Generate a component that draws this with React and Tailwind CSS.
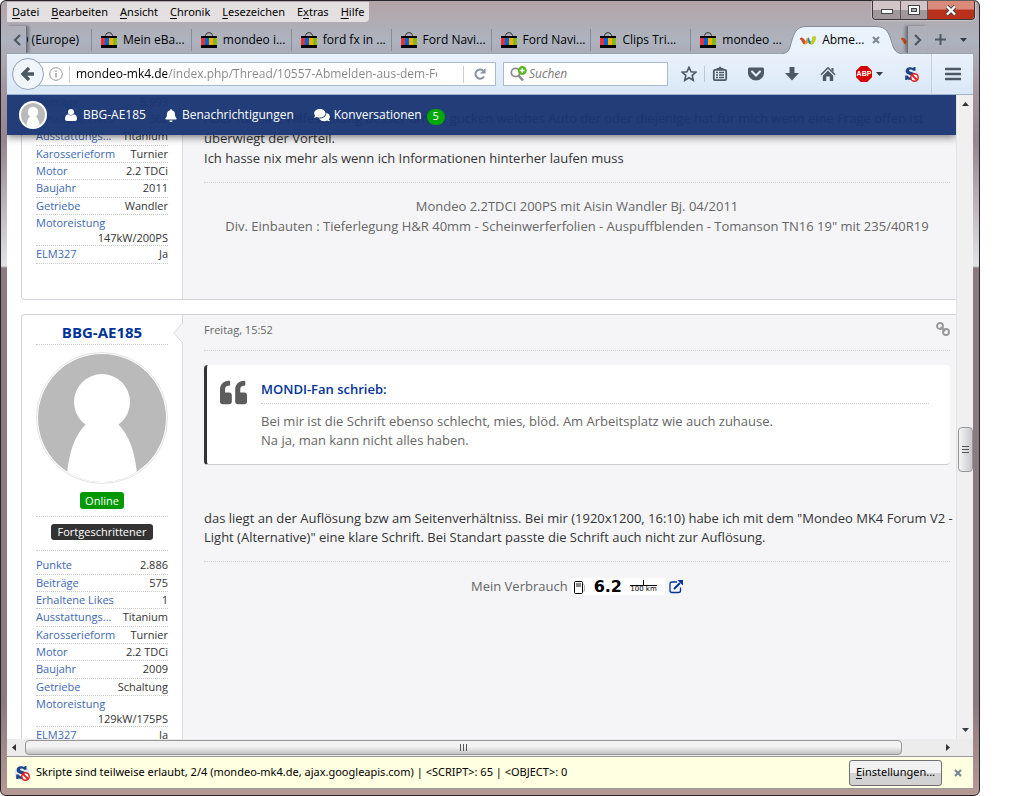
import { useState } from "react";
import { FaBell, FaComments, FaQuoteLeft } from "react-icons/fa";

const menuItems = [
  ["", "D", "atei"],
  ["", "B", "earbeiten"],
  ["", "A", "nsicht"],
  ["", "C", "hronik"],
  ["", "L", "esezeichen"],
  ["E", "x", "tras"],
  ["", "H", "ilfe"],
];

const tabs = [
  "Mein eBa...",
  "mondeo i...",
  "ford fx in ...",
  "Ford Navi...",
  "Ford Navi...",
  "Clips Tri...",
  "mondeo ...",
];

const firstUser = [
  ["Beiträge", "5.993"],
  ["Erhaltene Likes", "362"],
  ["Ausstattungs...", "Titanium"],
  ["Karosserieform", "Turnier"],
  ["Motor", "2.2 TDCi"],
  ["Baujahr", "2011"],
  ["Getriebe", "Wandler"],
  ["Motoreistung", "147kW/200PS"],
  ["ELM327", "Ja"],
];

const secondUser = [
  ["Punkte", "2.886"],
  ["Beiträge", "575"],
  ["Erhaltene Likes", "1"],
  ["Ausstattungs...", "Titanium"],
  ["Karosserieform", "Turnier"],
  ["Motor", "2.2 TDCi"],
  ["Baujahr", "2009"],
  ["Getriebe", "Schaltung"],
  ["Motoreistung", "129kW/175PS"],
  ["ELM327", "Ja"],
];

// Icons
const BagIcon = () => (
  <svg className="h-4 w-4 shrink-0" viewBox="0 0 16 16">
    <path d="M4.500 5V3.500Q5 .6 8 .6t3.500 2.900V5" fill="none" stroke="#333" />
    <rect y="4" width="16" height="12" fill="#000" />
    <rect y="6" width="4" height="7" fill="#e53238" />
    <rect x="4" y="6" width="4" height="7" fill="#0064d2" />
    <rect x="8" y="6" width="4" height="7" fill="#f5af02" />
    <rect x="12" y="6" width="4" height="7" fill="#86b817" />
  </svg>
);

const ForumIcon = () => (
  <svg className="h-4 w-4 shrink-0" viewBox="0 0 16 16">
    <path d="M0 6Q3 4.500 5 8.500L7 11Q3.500 14 1.800 9.500 1.200 7.500 0 7.500z" fill="#c8502a" />
    <path d="M4.500 11.500Q6 9.500 6.500 6.500L9 5.500Q9.500 12.500 4.500 12.500z" fill="#f09a28" />
    <path d="M8 5.500Q9.500 5.500 9.800 8.500L12 10.500Q11 13.500 8.800 11.500 7.500 10 8 5.500z" fill="#2f8fa8" />
    <path d="M10.500 11Q12.500 8.500 12 5.500 13.500 3 16 4.500 16 11.500 11 13z" fill="#c0cc28" />
  </svg>
);

const NoScriptIcon = () => (
  <svg className="h-4 w-4 shrink-0" viewBox="0 0 16 16">
    <circle cx="8" cy="8" r="7.600" fill="#dfe8f4" />
    <path
      d="M12.500 1v3.800H10Q9.500 3.400 7.600 3.400T6 4.600q.2 1 2.500 1.500 4.300 1 4.300 4-.5 3.900-5 3.900-2.200 0-3.300-.8L4 14H2.200V9.600h2.400q.8 2 3 2 1.800 0 1.800-1.200 0-1-2.400-1.500Q2.600 8 2.600 5 3 1.200 7 1.200q1.800 0 3 .7L11 1z"
      fill="#1c4587"
    />
    <circle cx="11.500" cy="11.500" r="3.700" fill="#fff" stroke="#e02020" strokeWidth="1.500" />
    <path d="M9 9l5 5" stroke="#e02020" strokeWidth="1.800" />
  </svg>
);

const StarIcon = () => (
  <svg className="h-4 w-4" viewBox="0 0 16 16">
    <path
      d="M8 1.200l2 4.500 4.900.5-3.700 3.200 1.100 4.900L8 11.800l-4.300 2.500 1.100-4.900L1.100 6.200 6 5.700z"
      fill="none"
      stroke="#4d5a66"
      strokeWidth="1.600"
    />
  </svg>
);

const ClipboardIcon = () => (
  <svg className="h-4 w-4" viewBox="0 0 16 16">
    <rect x="1.800" y="3.800" width="12.400" height="10.400" rx="1.500" fill="none" stroke="#4d5a66" strokeWidth="1.800" />
    <path d="M4.500 4V2h2L8 .3 9.500 2h2v2z" fill="#4d5a66" />
    <path d="M4 6.500h2M4 9h2M4 11.500h2M7 6.500h5M7 9h5M7 11.500h5" stroke="#4d5a66" strokeWidth="1.400" />
  </svg>
);

const PocketIcon = () => (
  <svg className="h-4 w-4" viewBox="0 0 16 16">
    <path d="M1.500 1.500h13a1.500 1.500 0 0 1 1.500 1.500v4a8 7.500 0 0 1-16 0V3a1.500 1.500 0 0 1 1.500-1.500z" fill="#4d5a66" />
    <path d="M4 5.500l4 4 4-4" fill="none" stroke="#e6f0fa" strokeWidth="2" strokeLinecap="round" />
  </svg>
);

const DownloadIcon = () => (
  <svg className="h-4 w-4" viewBox="0 0 16 16">
    <path d="M5.500 1h5v6H15l-7 7.500L1 7h4.500z" fill="#4d5a66" />
  </svg>
);

const HomeIcon = () => (
  <svg className="h-4 w-4" viewBox="0 0 16 16">
    <path d="M1 8.800l7-7 7 7" fill="none" stroke="#4d5a66" strokeWidth="1.600" />
    <path d="M8 4.500l5.200 5.200V15H9.800v-4.500H6.200V15H2.800V9.700z" fill="#4d5a66" />
    <path d="M11.500 2h2v4l-2-2z" fill="#4d5a66" />
  </svg>
);

const AbpIcon = () => (
  <span className="flex h-4 w-4 items-center justify-center bg-[#d40000] font-['Liberation_Sans'] text-[7px] leading-4 font-bold text-white [clip-path:polygon(30%_0,70%_0,100%_30%,100%_70%,70%_100%,30%_100%,0_70%,0_30%)]">
    ABP
  </span>
);

const Caret = () => (
  <svg className="h-1 w-[7px]" viewBox="0 0 7 4">
    <path d="M0 0h7L3.500 4z" fill="#333c45" />
  </svg>
);

const Chevron = ({ left }) => (
  <svg className="h-3 w-2" viewBox="0 0 8 12">
    <path d={left ? "M7 1L2 6l5 5" : "M1 1l5 5-5 5"} fill="none" stroke="#4d5a66" strokeWidth="2.200" />
  </svg>
);

const CrossIcon = () => (
  <svg className="h-2 w-2" viewBox="0 0 8 8">
    <path d="M1 1l6 6M7 1L1 7" stroke="#7c8896" strokeWidth="2.200" />
  </svg>
);

const UserIcon = () => (
  <svg className="h-3 w-3" viewBox="0 0 12 12">
    <circle cx="6" cy="3" r="3" fill="#fff" />
    <path d="M3.200 5.200Q6 7.600 8.800 5.200 12 5.500 12 10.300 11.800 12 10 12H2Q.2 12 0 10.300 0 5.500 3.200 5.200z" fill="#fff" />
  </svg>
);

const ChainIcon = () => (
  <svg className="h-[14px] w-[14px]" viewBox="0 0 14 14" fill="none" stroke="#999" strokeWidth="1.900">
    <circle cx="4" cy="4" r="3" />
    <circle cx="10" cy="10" r="3" />
    <path d="M4.800 4.800l4.400 4.400" />
  </svg>
);

const AvatarImage = () => (
  <svg className="h-full w-full rounded-full" viewBox="0 0 128 128">
    <rect width="128" height="128" fill="#bababa" />
    <circle cx="64" cy="48" r="28" fill="#fff" />
    <path d="M48 70Q32 86 29 120V128H99V120Q96 86 80 70z" fill="#fff" />
  </svg>
);

const PumpIcon = () => (
  <svg className="h-[17px] w-[14px]" viewBox="0 0 14 17">
    <rect x="2.500" y="3.500" width="8" height="12" rx="1" fill="#fff" stroke="#000" />
    <rect x="4" y="5" width="5" height="4" fill="#888" />
    <path d="M11 5.500l1.500 2V13H11" fill="none" stroke="#a9b6bd" />
  </svg>
);

const ExternalIcon = () => (
  <svg className="h-[14px] w-[14px]" viewBox="0 0 14 14">
    <path d="M8 2H3Q1 2 1 4v6.500q0 2 2 2h6.500q2 0 2-2V7.500" fill="none" stroke="#039" strokeWidth="1.300" />
    <path d="M5 9l6-6" stroke="#039" strokeWidth="2" />
    <path d="M8.500 0H14v5.500z" fill="#039" />
  </svg>
);

const MenuBar = () => (
  <nav className="mt-px flex h-5 items-center gap-3 rounded-br bg-[#e4e0e2] px-[5px] font-['Noto_Sans',sans-serif] text-[11px]">
    {menuItems.map(([before, key, after]) => (
      <button key={key + after}>
        {before}
        <u className="underline-offset-2">{key}</u>
        {after}
      </button>
    ))}
  </nav>
);

const WindowButtons = () => (
  <div className="-mr-0.5 flex h-[19px] overflow-hidden rounded-b border border-t-0 border-[#3c3539] shadow-[0_0_2px_#fff]">
    <button
      aria-label="Minimieren"
      className="flex w-[28px] items-center justify-center border-r border-[#5c5356] bg-linear-to-b from-[#d3c5c7] from-50% to-[#a0989b] to-50%"
    >
      <svg className="mt-1 h-[6px] w-3" viewBox="0 0 12 6">
        <rect x=".5" y=".5" width="11" height="4" fill="#fff" stroke="#444" />
      </svg>
    </button>
    <button
      aria-label="Maximieren"
      className="flex w-[27px] items-center justify-center border-r border-[#5c5356] bg-linear-to-b from-[#d3c5c7] from-50% to-[#a0989b] to-50%"
    >
      <svg className="h-[10px] w-3" viewBox="0 0 12 10">
        <rect x=".5" y=".5" width="11" height="9" fill="#fff" stroke="#444" />
        <rect x="3.500" y="3.500" width="5" height="3" fill="#aaa" stroke="#444" />
      </svg>
    </button>
    <button
      aria-label="Schließen"
      className="flex w-[46px] items-center justify-center bg-linear-to-b from-[#d98a78] from-45% to-[#b8301c] to-50%"
    >
      <svg className="h-[11px] w-3" viewBox="0 0 12 11">
        <path d="M2 1.500l8 8M10 1.500l-8 8" stroke="#444" strokeWidth="4" />
        <path d="M2 1.500l8 8M10 1.500l-8 8" stroke="#fff" strokeWidth="2.400" />
      </svg>
    </button>
  </div>
);

const TabStrip = () => (
  <div className="mt-1 flex h-[27px] items-center text-[12px]">
    <button aria-label="Tabs nach links" className="flex w-5 justify-center self-stretch border-r border-[#6c7078] pt-2 shadow-[2px_0_3px_#0005]">
      <Chevron left />
    </button>
    <div className="flex min-w-0 flex-1 items-center overflow-visible">
      <button className="flex w-16 justify-end overflow-hidden pr-3 whitespace-nowrap">O (Europe)</button>
      {tabs.map((title, i) => (
        <button
          key={i}
          className="flex h-[22px] w-[100px] items-center gap-[6px] border-l border-[#868a94] pl-[9px] whitespace-nowrap"
        >
          <BagIcon />
          {title}
        </button>
      ))}
      <div className="relative flex h-[27px] w-[104px] items-center">
        <svg className="absolute top-0 -left-2 h-7 w-[120px]" viewBox="0 0 120 28">
          <path
            d="M0 27.500C8 27.500 8 20 10 14S14 .5 24 .5H94C105 .5 107 8 109 14S112 27.500 120 27.500V28H0z"
            fill="#eaf2fb"
          />
          <path
            d="M0 27.500C8 27.500 8 20 10 14S14 .5 24 .5H94C105 .5 107 8 109 14S112 27.500 120 27.500"
            fill="none"
            stroke="#858d99"
          />
        </svg>
        <button className="relative flex flex-1 items-center gap-[6px] pl-[10px] whitespace-nowrap">
          <ForumIcon />
          Abme...
        </button>
        <button aria-label="Tab schließen" className="relative pr-[14px]">
          <CrossIcon />
        </button>
      </div>
      <div className="ml-[7px] flex w-[6px] overflow-hidden">
        <ForumIcon />
      </div>
    </div>
    <button aria-label="Tabs nach rechts" className="flex w-5 justify-center self-stretch border-l border-[#6c7078] pt-2 shadow-[-2px_0_3px_#0005]">
      <Chevron />
    </button>
    <button aria-label="Neuer Tab" className="flex w-[26px] justify-center">
      <svg className="h-[11px] w-[11px]" viewBox="0 0 11 11">
        <path d="M5.500 0v11M0 5.500h11" stroke="#4d5a66" strokeWidth="2" />
      </svg>
    </button>
    <button aria-label="Alle Tabs" className="flex w-5 justify-center">
      <Caret />
    </button>
  </div>
);

const Toolbar = () => {
  const [url, setUrl] = useState("mondeo-mk4.de/index.php/Thread/10557-Abmelden-aus-dem-Forum/");
  const [search, setSearch] = useState("");

  return (
    <div className="flex h-[42px] items-center border-t border-b border-t-[#9aa4b2] border-b-[#9db4cc] bg-linear-to-b from-[#eaf2fb] to-[#d9e8f7] pl-[5px]">
      <button
        aria-label="Zurück"
        className="z-10 flex h-8 w-8 items-center justify-center rounded-full border border-[#8fa1b5] bg-[#f1f6fc]"
      >
        <svg className="h-[14px] w-4" viewBox="0 0 16 14">
          <path d="M9 1L3 7l6 6M3 7h11" fill="none" stroke="#4d5a66" strokeWidth="3.400" />
        </svg>
      </button>
      <div className="-ml-2 flex h-6 min-w-0 flex-1 items-center border border-[#a9bccf] bg-white pl-3">
        <svg className="h-[14px] w-[14px] shrink-0" viewBox="0 0 14 14">
          <circle cx="7" cy="7" r="6.300" fill="none" stroke="#999" />
          <path d="M7 6v4.500M7 3.500v1.400" stroke="#999" strokeWidth="1.400" />
        </svg>
        <span className="mr-[6px] ml-[6px] h-[17px] w-px shrink-0 bg-[#ccc]" />
        <input
          aria-label="Adresse"
          value={url}
          onChange={(e) => setUrl(e.target.value)}
          className="mr-[26px] w-0 flex-1 bg-[linear-gradient(90deg,#000_91px,#858585_91px)] bg-clip-text text-[12px] text-transparent outline-none"
        />
        <button aria-label="Neu laden" className="flex h-[17px] w-8 items-center justify-center border-l border-[#ccc]">
          <svg className="h-3 w-3" viewBox="0 0 12 12">
            <path d="M10 8.500A4.600 4.600 0 1 1 9 2.500" fill="none" stroke="#8593a2" strokeWidth="2" />
            <path d="M11.500 0v5.500H6z" fill="#8593a2" />
          </svg>
        </button>
      </div>
      <div className="ml-[7px] flex h-6 w-[165px] items-center border border-[#a9bccf] bg-white pl-[6px]">
        <svg className="h-4 w-[17px] shrink-0" viewBox="0 0 17 16">
          <circle cx="5.500" cy="6.500" r="4.200" fill="none" stroke="#8c8c8c" strokeWidth="1.800" />
          <path d="M8.500 9.500l4.500 5" stroke="#8c8c8c" strokeWidth="2.600" />
          <circle cx="12.300" cy="4.500" r="4.400" fill="#52b818" />
          <path d="M12.300 2v5M9.800 4.500h5" stroke="#fff" strokeWidth="1.400" />
        </svg>
        <input
          aria-label="Suchen"
          placeholder="Suchen"
          value={search}
          onChange={(e) => setSearch(e.target.value)}
          className="ml-[2px] w-0 flex-1 text-[12px] outline-none placeholder:text-[#777] placeholder:italic"
        />
      </div>
      <button aria-label="Lesezeichen hinzufügen" className="ml-[13px]">
        <StarIcon />
      </button>
      <span className="ml-[7px] h-4 w-px bg-[#bcc8d4]" />
      <button aria-label="Lesezeichen anzeigen" className="ml-[7px]">
        <ClipboardIcon />
      </button>
      <button aria-label="Pocket" className="ml-5">
        <PocketIcon />
      </button>
      <button aria-label="Downloads" className="ml-5">
        <DownloadIcon />
      </button>
      <button aria-label="Startseite" className="ml-5">
        <HomeIcon />
      </button>
      <button aria-label="Adblock Plus" className="ml-5 flex items-center gap-1">
        <AbpIcon />
        <Caret />
      </button>
      <button aria-label="NoScript" className="ml-5">
        <NoScriptIcon />
      </button>
      <button aria-label="Menü" className="ml-3 flex h-10 w-[42px] items-center justify-center border-l border-[#c3d1df]">
        <svg className="h-[14px] w-4" viewBox="0 0 16 14">
          <path d="M1 2h14M1 7h14M1 12h14" stroke="#4d5a66" strokeWidth="2.600" strokeLinecap="round" />
        </svg>
      </button>
    </div>
  );
};

const ForumNav = () => (
  <nav className="absolute inset-x-0 top-0 flex h-10 items-center bg-[#193571]/96 pl-3 text-[12px] text-white shadow-[0_2px_8px_#0008]">
    <a href="#profil" aria-label="Profil" className="h-7 w-7 rounded-full bg-white p-[2px]">
      <AvatarImage />
    </a>
    <a href="#benutzer" className="ml-[18px] flex items-center gap-[6px]">
      <UserIcon />
      BBG-AE185
    </a>
    <a href="#benachrichtigungen" className="ml-[18px] flex items-center gap-1">
      <FaBell className="h-[13px] w-[14px]" />
      Benachrichtigungen
    </a>
    <a href="#konversationen" className="ml-5 flex items-center gap-1">
      <FaComments className="h-[14px] w-4" />
      Konversationen
      <span className="mt-[3px] ml-px flex h-4 w-[18px] items-center justify-center rounded-full bg-[#00a800] text-[11px]">
        5
      </span>
    </a>
  </nav>
);

const UserStats = ({ rows }) => (
  <dl className="text-[11px] leading-[15px]">
    {rows.map(([label, value]) => (
      <div
        key={label}
        className="flex min-h-[17px] flex-wrap justify-between border-b border-dotted border-[#ccc] nth-last-[3n+1]:min-h-[18px]"
      >
        <dt className="text-[#4068b4]">{label}</dt>
        <dd className="ml-auto text-[#333]">{value}</dd>
      </div>
    ))}
  </dl>
);

const Post = ({ sidebar, children }) => (
  <article className="ml-[14px] flex rounded-l border-y border-l border-[#d2d3da] bg-[#f5f5f8]">
    <aside className="w-[161px] shrink-0 rounded-l border-r border-[#d9dae0] bg-white px-[14px]">{sidebar}</aside>
    <div className="min-w-0 flex-1 pr-[6px] pl-[21px] text-[13px] leading-[19px] text-[#333]">{children}</div>
  </article>
);

const Page = () => (
  <main className="relative min-w-0 flex-1 overflow-hidden bg-white font-['Open_Sans',sans-serif]">
    <div className="-mt-0.5">
      <Post
        sidebar={
          <div className="h-[205px]">
            <UserStats rows={firstUser} />
          </div>
        }
      >
        <p className="pt-[14px] leading-5">
          Aber für eine Hilfestellung besser um zu gucken welches Auto der oder diejenige hat für mich wenn eine Frage
          offen ist überwiegt der Vorteil.
          <br />
          Ich hasse nix mehr als wenn ich Informationen hinterher laufen muss
        </p>
        <p className="mt-[14px] border-t border-dotted border-[#d2d2d6] pt-[13px] text-center leading-5 text-[#666]">
          Mondeo 2.2TDCI 200PS mit Aisin Wandler Bj. 04/2011
          <br />
          Div. Einbauten : Tieferlegung H&amp;R 40mm - Scheinwerferfolien - Auspuffblenden - Tomanson TN16 19" mit
          235/40R19
        </p>
      </Post>
    </div>

    <div className="mt-[14px]">
      <Post
        sidebar={
          <div className="relative flex flex-col">
            <svg className="absolute top-2 -right-[15px] h-5 w-[10px]" viewBox="0 0 10 20">
              <path d="M10 0L1 10l9 10z" fill="#f5f5f8" />
              <path d="M9.500 0L.8 10l8.700 10" fill="none" stroke="#d9dae0" />
            </svg>
            <h3 className="border-b border-dotted border-[#ccc] pt-[5px] text-center text-[15px] leading-6 font-bold text-[#039]">
              <a href="#bbg-ae185">BBG-AE185</a>
            </h3>
            <div className="mt-[7px] h-[132px] w-[132px] rounded-full border border-[#e4e4e4] p-px">
              <AvatarImage />
            </div>
            <div className="mt-2 flex justify-center border-b border-dotted border-[#ccc] pb-[7px]">
              <span className="rounded-[3px] bg-[#090] px-[5px] text-[11px] leading-[17px] text-white">Online</span>
            </div>
            <div className="mb-[6px] flex justify-center border-b border-dotted border-[#ccc] pt-[7px] pb-[10px]">
              <span className="rounded-[3px] bg-[#333] px-[7px] text-[11px] leading-4 text-white">Fortgeschrittener</span>
            </div>
            <UserStats rows={secondUser} />
          </div>
        }
      >
        <header className="flex h-9 items-center justify-between border-b border-dotted border-[#d2d2d6] pb-[7px] text-[11px] text-[#666]">
          <time>Freitag, 15:52</time>
          <a href="#post" aria-label="Link zum Beitrag">
            <ChainIcon />
          </a>
        </header>
        <blockquote className="mt-[14px] flex rounded border-b border-l-3 border-b-[#ccc] border-l-[#333] bg-white pt-[15px] pr-[21px] pb-[14px] pl-[13px] text-[#666]">
          <FaQuoteLeft className="-mt-px h-[27px] w-[27px] shrink-0 text-[#5c5c5c]" />
          <div className="ml-[14px] flex-1">
            <h4 className="mb-2 border-b border-dotted border-[#d2d2d6] pb-1 font-semibold text-[#039]">
              <a href="#zitat">MONDI-Fan schrieb:</a>
            </h4>
            Bei mir ist die Schrift ebenso schlecht, mies, blöd. Am Arbeitsplatz wie auch zuhause.
            <br />
            Na ja, man kann nicht alles haben.
          </div>
        </blockquote>
        <p className="mt-11 whitespace-nowrap">
          das liegt an der Auflösung bzw am Seitenverhältniss. Bei mir (1920x1200, 16:10) habe ich mit dem "Mondeo MK4
          Forum V2 -<br />
          Light (Alternative)" eine klare Schrift. Bei Standart passte die Schrift auch nicht zur Auflösung.
        </p>
        <div className="mt-[14px] flex items-center justify-center gap-1 border-t border-dotted border-[#d2d2d6] pt-[15px] text-[#666]">
          Mein Verbrauch
          <span className="flex h-[17px] items-center bg-white text-black">
            <PumpIcon />
            <b className="ml-2 font-['DejaVu_Sans'] text-[16px] leading-4">6.2</b>
            <span className="mr-2 ml-2 flex w-[27px] flex-col items-center font-['DejaVu_Sans'] text-[7px] leading-[7px]">
              <span className="h-[5px] w-px bg-black" />
              <span className="w-full border-t border-black text-center whitespace-nowrap">100 km</span>
            </span>
          </span>
          <a href="#verbrauch" aria-label="Verbrauch anzeigen">
            <ExternalIcon />
          </a>
        </div>
      </Post>
    </div>

    <ForumNav />
  </main>
);

const VerticalScrollbar = () => (
  <div className="flex w-[17px] flex-col items-center border-l border-[#e3e3e3] bg-[#f0f0f0] py-[7px]">
    <svg className="h-1 w-[7px]" viewBox="0 0 7 4">
      <path d="M0 4h7L3.500 0z" fill="#333" />
    </svg>
    <div className="grow-5" />
    <div className="flex h-[45px] w-[15px] items-center justify-center rounded-sm border border-[#979797] bg-linear-to-r from-[#f4f4f4] to-[#c8c9cc]">
      <svg className="h-[7px] w-[7px]" viewBox="0 0 7 7">
        <path d="M0 .5h7M0 3.500h7M0 6.500h7" stroke="#555" />
      </svg>
    </div>
    <div className="grow-4" />
    <Caret />
  </div>
);

const HorizontalScrollbar = () => (
  <div className="flex h-[17px] items-center bg-[#ececec] pr-[23px] pl-[5px]">
    <svg className="h-[7px] w-1" viewBox="0 0 4 7">
      <path d="M4 0v7L0 3.500z" fill="#333" />
    </svg>
    <div className="mr-11 ml-[9px] flex h-[15px] flex-1 items-center justify-center rounded-sm border border-[#979797] bg-linear-to-b from-[#f2f2f2] from-45% to-[#c2c3c6]">
      <svg className="h-[7px] w-2" viewBox="0 0 8 7">
        <path d="M.5 0v7M3.500 0v7M6.500 0v7" stroke="#555" />
      </svg>
    </div>
    <svg className="h-[7px] w-1" viewBox="0 0 4 7">
      <path d="M0 0v7l4-3.500z" fill="#333" />
    </svg>
  </div>
);

const ScriptBar = () => (
  <div className="flex h-[33px] items-center border-y border-[#9a9a9a] bg-[#ffffe1] pr-[11px] pl-[7px] font-['Noto_Sans',sans-serif] text-[11px]">
    <NoScriptIcon />
    <p className="ml-[6px] flex-1">
      Skripte sind teilweise erlaubt, 2/4 (mondeo-mk4.de, ajax.googleapis.com) | &lt;SCRIPT&gt;: 65 | &lt;OBJECT&gt;: 0
    </p>
    <button className="h-[26px] w-[93px] rounded-[3px] border border-[#707070] bg-linear-to-b from-[#f2f2f2] from-50% to-[#d2d2d2] to-50%">
      <u className="underline-offset-2">E</u>instellungen...
    </button>
    <button aria-label="Leiste schließen" className="ml-3">
      <CrossIcon />
    </button>
  </div>
);

export default function App() {
  return (
    <div className="h-screen bg-white pr-11 font-['Open_Sans',sans-serif] text-black">
      <div className="flex h-full flex-col rounded-t-md rounded-b-md border border-[#26242a] bg-[linear-gradient(#b3a4a7,#adb3bf_40px,#a3969c_90px,#94868c_140px,#e2e2e5_265px,#8b7a80_267px,#8b7a80_700px,#b59a94)] px-[6px] pb-[6px]">
        <div className="flex items-start justify-between">
          <MenuBar />
          <WindowButtons />
        </div>
        <TabStrip />
        <Toolbar />
        <div className="flex min-h-0 flex-1">
          <Page />
          <VerticalScrollbar />
        </div>
        <HorizontalScrollbar />
        <ScriptBar />
      </div>
    </div>
  );
}
